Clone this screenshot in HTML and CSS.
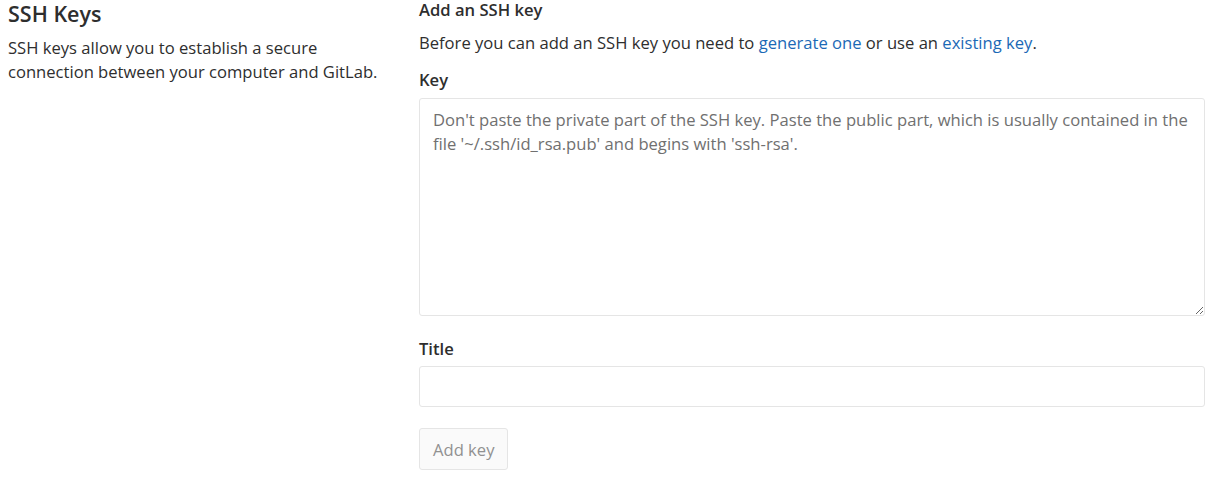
FILE: index.html
```html
<!DOCTYPE html>
<html>
<head>
<meta charset="utf-8">
<link rel="stylesheet" href="styles.css">
</head>
<body>
<div class="page">
  <div class="side">
    <h4 class="side-title">SSH Keys</h4>
    <p class="side-text">SSH keys allow you to establish a secure connection between your computer and GitLab.</p>
  </div>
  <div class="main">
    <h5 class="main-title">Add an SSH key</h5>
    <p class="intro">Before you can add an SSH key you need to <a href="#" class="link">generate one</a> or use an <a href="#" class="link">existing key</a>.</p>
    <form class="form">
      <div class="group">
        <label class="label" for="key">Key</label>
        <textarea id="key" class="textarea" placeholder="Don't paste the private part of the SSH key. Paste the public part, which is usually contained in the file '~/.ssh/id_rsa.pub' and begins with 'ssh-rsa'."></textarea>
      </div>
      <div class="group">
        <label class="label label-title" for="title">Title</label>
        <input id="title" class="input" type="text">
      </div>
      <div class="actions">
        <button type="button" class="btn" disabled>Add key</button>
      </div>
    </form>
  </div>
</div>
</body>
</html>
```
FILE: styles.css
```css
* { box-sizing: border-box; }
body {
  margin: 0;
  background: #fff;
  color: #2e2e2e;
  font-family: "Open Sans", "Noto Sans", sans-serif;
  font-size: 16.6px;
}
.page {
  display: grid;
  grid-template-columns: 411px 1fr;
  padding: 0 7px 0 8px;
}
.side { padding-right: 26px; }
.side-title {
  margin: 0;
  font-size: 21.5px;
  font-weight: 600;
  line-height: 28px;
  color: #2e2e2e;
}
.side-text {
  margin: 8px 0 0;
  line-height: 24px;
}
.main-title {
  margin: 0;
  font-size: 16.6px;
  font-weight: 600;
  line-height: 20px;
}
.intro {
  margin: 11px 0 0;
  line-height: 24px;
}
.link { color: #1b69b6; text-decoration: none; }
.form { margin-top: 14px; }
.group { margin-bottom: 22px; }
.label {
  display: block;
  font-weight: 600;
  line-height: 22px;
  margin-bottom: 7px;
}
.label-title { margin-bottom: 6px; }
.textarea {
  display: block;
  width: 100%;
  height: 218px;
  border: 1px solid #e5e5e5;
  border-radius: 3px;
  padding: 9px 13px;
  font-family: inherit;
  font-size: 16.6px;
  line-height: 24px;
  color: #2e2e2e;
  resize: vertical;
}
.textarea::placeholder { color: #707070; opacity: 1; }
.input {
  display: block;
  width: 100%;
  height: 41px;
  border: 1px solid #e5e5e5;
  border-radius: 3px;
  padding: 6px 13px;
  font-family: inherit;
  font-size: 16.6px;
}
.actions { margin-top: -1px; }
.btn {
  height: 42px;
  padding: 0 13px;
  background: #fafafa;
  border: 1px solid #e5e5e5;
  border-radius: 3px;
  font-family: inherit;
  font-size: 16.6px;
  color: #919191;
}
```
